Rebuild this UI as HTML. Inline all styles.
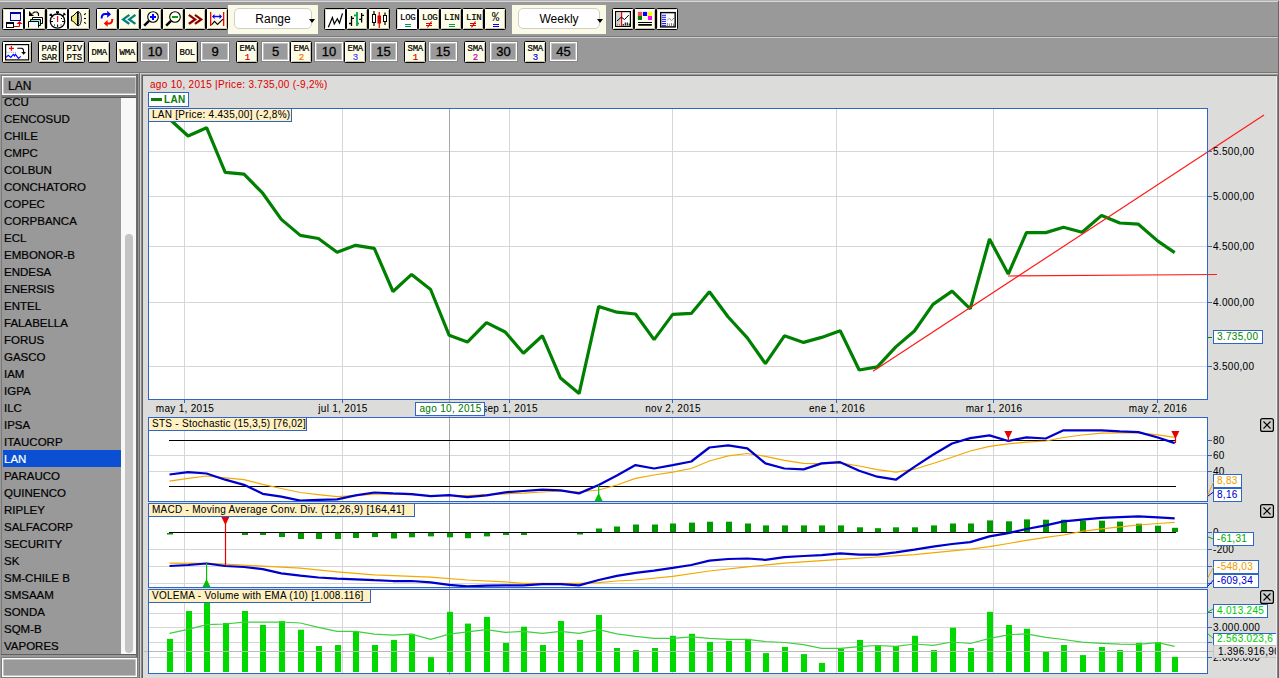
<!DOCTYPE html>
<html><head><meta charset="utf-8"><style>
html,body{margin:0;padding:0;width:1279px;height:678px;overflow:hidden;background:#999999;font-family:"Liberation Sans", sans-serif;}
.bs{position:absolute;display:block}
.dd{position:absolute;background:#fff;border:1px solid #cfcfc8;border-radius:5px;font-size:12px;line-height:21.5px;text-align:center;color:#000}
.fld{position:absolute;border:1px solid #fff;box-shadow:0 0 0 1px #858585, inset 0 0 0 1px #c0c0c0;background:#9a9a9a;font-size:13px;line-height:20px;text-align:center;color:#000;-webkit-text-stroke:0.3px #000}
.li{position:absolute;left:2px;font-size:11.5px;line-height:14px;color:#000;white-space:nowrap;-webkit-text-stroke:0.2px currentColor}
</style></head><body>
<div style="position:absolute;left:0;top:0;width:1279px;height:1px;background:#b4b4b4"></div><div style="position:absolute;left:0;top:1px;width:1279px;height:1px;background:#d8d8d8"></div><div style="position:absolute;left:1278px;top:1px;width:1px;height:677px;background:#666"></div>
<div style="position:absolute;left:0;top:36px;width:1279px;height:1px;background:#7a7a7a"></div>
<div style="position:absolute;left:0;top:37px;width:1279px;height:1px;background:#cdcdcd"></div>
<div style="position:absolute;left:0;top:72px;width:1279px;height:1px;background:#777"></div>
<div style="position:absolute;left:0;top:73px;width:1279px;height:1px;background:#cdcdcd"></div>
<svg class="bs" style="left:2px;top:8px" width="22" height="22"><rect x="0.5" y="0.5" width="21" height="21" rx="1" fill="#ffffff" stroke="#000"/><path d="M1.5 20 V1.5 H20" stroke="#dedac0" fill="none"/><path d="M2 20.5 H20.5 V2" stroke="#ffffff" fill="none"/><rect x="8.5" y="4.5" width="10" height="8" fill="#f4f4f4" stroke="#0000a8"/><rect x="8" y="4" width="11" height="2" fill="#0000a8"/><rect x="4.5" y="14.5" width="7" height="5" fill="#fff" stroke="#000"/><rect x="4" y="14" width="8" height="2" fill="#000"/><path d="M12 18.5 H17.5 V15" fill="none" stroke="#e00" stroke-width="1"/><path d="M14.5 16 L17.5 13 L20.5 16 Z" fill="#e00"/></svg><svg class="bs" style="left:24px;top:8px" width="22" height="22"><rect x="0.5" y="0.5" width="21" height="21" rx="1" fill="#fdfce6" stroke="#000"/><path d="M1.5 20 V1.5 H20" stroke="#ffffff" fill="none"/><path d="M2 20.5 H20.5 V2" stroke="#c9c6ad" fill="none"/><path d="M5 3 V8 H10 Z" fill="#000"/><path d="M8.5 5.5 L10.5 4 H13 L14.5 5.5 V8" fill="none" stroke="#000" stroke-width="1.1"/><path d="M8.5 15 V9.5 H18.5 V15.5 H16" fill="#fff" stroke="#000"/><path d="M6.5 17 V11.5 H16.5 V17.5 H14" fill="#80f0f0" stroke="#000"/><path d="M4.5 19.5 V13.5 H14.5 V19.5" fill="#f8f8f8" stroke="#000"/></svg><svg class="bs" style="left:46px;top:8px" width="22" height="22"><rect x="0.5" y="0.5" width="21" height="21" rx="1" fill="#ffffff" stroke="#000"/><path d="M1.5 20 V1.5 H20" stroke="#dedac0" fill="none"/><path d="M2 20.5 H20.5 V2" stroke="#ffffff" fill="none"/><path d="M11.5 6 C16 6 18.7 9 18.7 13.2 C18.7 17.5 15.5 20.2 11.5 20.2 C7.5 20.2 4.3 17.5 4.3 13.2 C4.3 9 7 6 11.5 6 Z" fill="#fff" stroke="#000" stroke-width="1.3"/><rect x="10" y="3.2" width="3" height="1.8" fill="#000"/><rect x="11" y="4.5" width="1" height="2" fill="#000"/><path d="M4 6 L7 9 M3.5 7.5 L6 6 M19 5.5 L16 8.5 M17.5 5 L19.5 7" stroke="#000" stroke-width="1.3"/><rect x="11" y="8" width="1.2" height="6" fill="#f00"/><path d="M11.6 16.5 V19 M4.5 13.5 H7 M16 13.5 H18.5" stroke="#000" stroke-width="1"/><rect x="7.5" y="10" width="1" height="1" fill="#000"/><rect x="15" y="10" width="1" height="1" fill="#000"/><rect x="8" y="16.5" width="1" height="1" fill="#000"/><rect x="14.5" y="16.5" width="1" height="1" fill="#000"/></svg><svg class="bs" style="left:68px;top:8px" width="22" height="22"><rect x="0.5" y="0.5" width="21" height="21" rx="1" fill="#fdfce6" stroke="#000"/><path d="M1.5 20 V1.5 H20" stroke="#ffffff" fill="none"/><path d="M2 20.5 H20.5 V2" stroke="#c9c6ad" fill="none"/><path d="M3.5 8.5 L5 8 L9.5 3.5 L9.5 17.8 L5 13.2 L3.5 12.8 Z" fill="#f0ea80" stroke="#000"/><path d="M10 3.5 C12.5 3.8 13.3 8 13.3 10.7 C13.3 13.5 12.5 17.7 10 17.8 C11 15 11 6 10 3.5 Z" fill="#fff" stroke="#000" stroke-width="1"/><path d="M16.2 6.8 L17.8 5.3 M16 10.5 H18 M16.2 14.2 L17.8 15.7" stroke="#000" stroke-width="1.1"/></svg><svg class="bs" style="left:96px;top:8px" width="22" height="22"><rect x="0.5" y="0.5" width="21" height="21" rx="1" fill="#fdfce6" stroke="#000"/><path d="M1.5 20 V1.5 H20" stroke="#ffffff" fill="none"/><path d="M2 20.5 H20.5 V2" stroke="#c9c6ad" fill="none"/><path d="M5.6 10.6 C5.6 7.5 7 6 9 6 H11.8" fill="none" stroke="#0000ff" stroke-width="2"/><path d="M11.2 2.8 L15 6.2 L11.2 9.8 Z" fill="#0000ff"/><path d="M16.3 11 C16.3 14 15.5 15.4 13.5 15.4 H10.8" fill="none" stroke="#ff0000" stroke-width="2"/><path d="M11.6 12 L7.8 15.4 L11.6 18.8 Z" fill="#ff0000"/></svg><svg class="bs" style="left:118px;top:8px" width="22" height="22"><rect x="0.5" y="0.5" width="21" height="21" rx="1" fill="#fdfce6" stroke="#000"/><path d="M1.5 20 V1.5 H20" stroke="#ffffff" fill="none"/><path d="M2 20.5 H20.5 V2" stroke="#c9c6ad" fill="none"/><path d="M10.4 7.6 L5.1 11.4 L10.4 15.2 M16.5 7.6 L11.2 11.4 L16.5 15.2" fill="none" stroke="#008080" stroke-width="2.3" stroke-linecap="square"/></svg><svg class="bs" style="left:140px;top:8px" width="22" height="22"><rect x="0.5" y="0.5" width="21" height="21" rx="1" fill="#fdfce6" stroke="#000"/><path d="M1.5 20 V1.5 H20" stroke="#ffffff" fill="none"/><path d="M2 20.5 H20.5 V2" stroke="#c9c6ad" fill="none"/><circle cx="13" cy="9" r="5.3" fill="#fff" stroke="#000" stroke-width="1.1"/><path d="M9 12.9 L4.2 17.7" stroke="#000" stroke-width="2.4"/><path d="M10 9 H16 M13 6 V12" stroke="#0000ff" stroke-width="2"/></svg><svg class="bs" style="left:162px;top:8px" width="22" height="22"><rect x="0.5" y="0.5" width="21" height="21" rx="1" fill="#fdfce6" stroke="#000"/><path d="M1.5 20 V1.5 H20" stroke="#ffffff" fill="none"/><path d="M2 20.5 H20.5 V2" stroke="#c9c6ad" fill="none"/><circle cx="13" cy="9" r="5.3" fill="#fff" stroke="#000" stroke-width="1.1"/><path d="M9 12.9 L4.2 17.7" stroke="#000" stroke-width="2.4"/><path d="M10 9 H16" stroke="#00a000" stroke-width="2"/></svg><svg class="bs" style="left:184px;top:8px" width="22" height="22"><rect x="0.5" y="0.5" width="21" height="21" rx="1" fill="#fdfce6" stroke="#000"/><path d="M1.5 20 V1.5 H20" stroke="#ffffff" fill="none"/><path d="M2 20.5 H20.5 V2" stroke="#c9c6ad" fill="none"/><path d="M5.8 7.6 L11.1 11.4 L5.8 15.2 M11.9 7.6 L17.2 11.4 L11.9 15.2" fill="none" stroke="#8c0000" stroke-width="2.3" stroke-linecap="square"/></svg><svg class="bs" style="left:206px;top:8px" width="22" height="22"><rect x="0.5" y="0.5" width="21" height="21" rx="1" fill="#fdfce6" stroke="#000"/><path d="M1.5 20 V1.5 H20" stroke="#ffffff" fill="none"/><path d="M2 20.5 H20.5 V2" stroke="#c9c6ad" fill="none"/><rect x="4" y="4" width="1.3" height="14" fill="#f00"/><rect x="17" y="4" width="1.3" height="14" fill="#f00"/><path d="M7 8.5 H15" stroke="#0000ff" stroke-width="1.4"/><path d="M6 8.5 L8.5 6 V11 Z M16 8.5 L13.5 6 V11 Z" fill="#0000ff"/><path d="M5.5 16.8 L8.5 13.3 L11.5 16.5 L17 11.2" fill="none" stroke="#000" stroke-width="1.1"/></svg><svg class="bs" style="left:324px;top:8px" width="22" height="22"><rect x="0.5" y="0.5" width="21" height="21" rx="1" fill="#ffffff" stroke="#000"/><path d="M1.5 20 V1.5 H20" stroke="#dedac0" fill="none"/><path d="M2 20.5 H20.5 V2" stroke="#ffffff" fill="none"/><path d="M4.3 19.2 L8.4 9.6 L10.3 16 L13.3 10.7 L15.5 15 L18.5 5.4" fill="none" stroke="#000" stroke-width="1.25"/></svg><svg class="bs" style="left:346px;top:8px" width="22" height="22"><rect x="0.5" y="0.5" width="21" height="21" rx="1" fill="#fdfce6" stroke="#000"/><path d="M1.5 20 V1.5 H20" stroke="#ffffff" fill="none"/><path d="M2 20.5 H20.5 V2" stroke="#c9c6ad" fill="none"/><path d="M5.5 8 V18 M3 15.5 H5.5 M5.5 10.3 H8 M15.6 5 V14.6 M13.2 11.4 H15.6 M15.6 7.3 H18" stroke="#000" stroke-width="1.3"/><path d="M11 4 V18 M8 7.3 H11 M11 15.5 H13" stroke="#00a050" stroke-width="1.8"/></svg><svg class="bs" style="left:368px;top:8px" width="22" height="22"><rect x="0.5" y="0.5" width="21" height="21" rx="1" fill="#fdfce6" stroke="#000"/><path d="M1.5 20 V1.5 H20" stroke="#ffffff" fill="none"/><path d="M2 20.5 H20.5 V2" stroke="#c9c6ad" fill="none"/><rect x="4.5" y="6.5" width="3" height="8" fill="#fff" stroke="#000"/><path d="M6 3 V6.5 M6 14.5 V18" stroke="#000" stroke-width="1.2"/><rect x="9.5" y="7.5" width="3.5" height="8" fill="#d00"/><path d="M11.25 4 V20" stroke="#d00" stroke-width="1.2"/><rect x="15.5" y="7.5" width="3" height="6" fill="#fff" stroke="#000"/><path d="M17 4.5 V7.5 M17 13.5 V17" stroke="#000" stroke-width="1.2"/></svg><svg class="bs" style="left:396px;top:8px" width="22" height="22"><rect x="0.5" y="0.5" width="21" height="21" rx="1" fill="#ffffff" stroke="#000"/><path d="M1.5 20 V1.5 H20" stroke="#dedac0" fill="none"/><path d="M2 20.5 H20.5 V2" stroke="#ffffff" fill="none"/><text x="11.8" y="12" font-size="9" text-anchor="middle" fill="#000" stroke="#000" stroke-width="0.2" font-family="'Liberation Mono', monospace" letter-spacing="-0.25">LOG</text><path d="M9 16.5 H15 M9 18.5 H15" stroke="#00a040" stroke-width="1.2"/></svg><svg class="bs" style="left:418px;top:8px" width="22" height="22"><rect x="0.5" y="0.5" width="21" height="21" rx="1" fill="#fdfce6" stroke="#000"/><path d="M1.5 20 V1.5 H20" stroke="#ffffff" fill="none"/><path d="M2 20.5 H20.5 V2" stroke="#c9c6ad" fill="none"/><text x="11.8" y="12" font-size="9" text-anchor="middle" fill="#000" stroke="#000" stroke-width="0.2" font-family="'Liberation Mono', monospace" letter-spacing="-0.25">LOG</text><path d="M8 15.5 H14 M8 17.5 H14 M13.5 13.5 L9.5 19.5" stroke="#e00000" stroke-width="1.2"/></svg><svg class="bs" style="left:440px;top:8px" width="22" height="22"><rect x="0.5" y="0.5" width="21" height="21" rx="1" fill="#fdfce6" stroke="#000"/><path d="M1.5 20 V1.5 H20" stroke="#ffffff" fill="none"/><path d="M2 20.5 H20.5 V2" stroke="#c9c6ad" fill="none"/><text x="11.8" y="12" font-size="9" text-anchor="middle" fill="#000" stroke="#000" stroke-width="0.2" font-family="'Liberation Mono', monospace" letter-spacing="-0.25">LIN</text><path d="M9 16.5 H15 M9 18.5 H15" stroke="#00a040" stroke-width="1.2"/></svg><svg class="bs" style="left:462px;top:8px" width="22" height="22"><rect x="0.5" y="0.5" width="21" height="21" rx="1" fill="#fdfce6" stroke="#000"/><path d="M1.5 20 V1.5 H20" stroke="#ffffff" fill="none"/><path d="M2 20.5 H20.5 V2" stroke="#c9c6ad" fill="none"/><text x="11.8" y="12" font-size="9" text-anchor="middle" fill="#000" stroke="#000" stroke-width="0.2" font-family="'Liberation Mono', monospace" letter-spacing="-0.25">LIN</text><path d="M8 15.5 H14 M8 17.5 H14 M13.5 13.5 L9.5 19.5" stroke="#e00000" stroke-width="1.2"/></svg><svg class="bs" style="left:484px;top:8px" width="22" height="22"><rect x="0.5" y="0.5" width="21" height="21" rx="1" fill="#fdfce6" stroke="#000"/><path d="M1.5 20 V1.5 H20" stroke="#ffffff" fill="none"/><path d="M2 20.5 H20.5 V2" stroke="#c9c6ad" fill="none"/><text x="11.5" y="12.5" font-size="12" text-anchor="middle" fill="#000" font-family="'Liberation Mono', monospace">%</text><path d="M9 16.5 H15 M9 18.5 H15" stroke="#0000ff" stroke-width="1.2"/></svg><svg class="bs" style="left:612px;top:8px" width="22" height="22"><rect x="0.5" y="0.5" width="21" height="21" rx="1" fill="#fdfce6" stroke="#000"/><path d="M1.5 20 V1.5 H20" stroke="#ffffff" fill="none"/><path d="M2 20.5 H20.5 V2" stroke="#c9c6ad" fill="none"/><rect x="3.6" y="3.6" width="14.8" height="14.8" fill="#fff" stroke="#000" stroke-width="1.2"/><rect x="4.5" y="4.5" width="4.5" height="13.5" fill="#d0d0d0"/><rect x="9" y="4" width="1.2" height="14" fill="#f00"/><path d="M5 13 L9.3 9.2 L12.5 11.5 L16.7 7.2" fill="none" stroke="#000" stroke-width="1"/><path d="M5.5 16 V17.5 M7.5 16 V17.5" stroke="#999"/><path d="M11.3 16 V17.5 M13.3 14.5 V17.5 M15.3 14.5 V17.5 M17.3 15.5 V17.5" stroke="#000" stroke-width="1.1"/></svg><svg class="bs" style="left:634px;top:8px" width="22" height="22"><rect x="0.5" y="0.5" width="21" height="21" rx="1" fill="#fdfce6" stroke="#000"/><path d="M1.5 20 V1.5 H20" stroke="#ffffff" fill="none"/><path d="M2 20.5 H20.5 V2" stroke="#c9c6ad" fill="none"/><rect x="3.9" y="3.9" width="4.1" height="4.1" fill="#ff5050"/><rect x="8.9" y="3.9" width="4.2" height="4.1" fill="#0000ff"/><rect x="14" y="3.9" width="4" height="4.1" fill="#ffff00"/><rect x="3.9" y="8" width="4.1" height="4" fill="#008000"/><rect x="14" y="8" width="4" height="4" fill="#ff00ff"/><rect x="4" y="14" width="14" height="1" fill="#000"/><rect x="4" y="16" width="14" height="1.8" rx="0.8" fill="#000"/></svg><svg class="bs" style="left:656px;top:8px" width="22" height="22"><rect x="0.5" y="0.5" width="21" height="21" rx="1" fill="#ffffff" stroke="#000"/><path d="M1.5 20 V1.5 H20" stroke="#dedac0" fill="none"/><path d="M2 20.5 H20.5 V2" stroke="#ffffff" fill="none"/><rect x="4.7" y="4.6" width="14.5" height="14.3" fill="#fafafa" stroke="#000" stroke-width="1.4"/><path d="M6 7.3 H10 M6 9.3 H10 M6 11.4 H10 M6 13.4 H10 M6 15.5 H10 M6 17.4 H10" stroke="#0000ff" stroke-width="0.9"/><path d="M11 12.7 L13.4 10.1 L15.5 12.7 L18.8 9.1" fill="none" stroke="#888" stroke-width="0.9"/><path d="M11.3 15 V18 M13.4 15.5 V18 M15.5 15 V18 M17.5 15.5 V18" stroke="#888"/></svg><div style="position:absolute;left:228px;top:5px;width:90px;height:29px;background:#fbfae6"></div><div class="dd" style="left:234px;top:8px;width:76px;height:19px">Range</div><svg style="position:absolute;left:309px;top:19px" width="6" height="4"><path d="M0 0 H6 L3 4 Z" fill="#000"/></svg><div style="position:absolute;left:512px;top:5px;width:94px;height:29px;background:#fbfae6"></div><div class="dd" style="left:518px;top:8px;width:80px;height:19px">Weekly</div><svg style="position:absolute;left:597px;top:19px" width="6" height="4"><path d="M0 0 H6 L3 4 Z" fill="#000"/></svg><svg class="bs" style="left:2px;top:41px" width="30" height="22"><rect x="0.5" y="0.5" width="29" height="21" rx="1" fill="#fdfce6" stroke="#000"/><path d="M1.5 20 V1.5 H28" stroke="#ffffff" fill="none"/><path d="M2 20.5 H28.5 V2" stroke="#c9c6ad" fill="none"/><rect x="3.6" y="3.6" width="23" height="15.3" fill="#fff" stroke="#000" stroke-width="1.2"/><path d="M7 7.4 H12 M9.4 5 V9.8" stroke="#f00" stroke-width="1.2"/><path d="M4.5 11.4 H15" stroke="#999" stroke-width="0.9" stroke-dasharray="1 1.1"/><path d="M4 16.4 L6.3 14.3 L8.8 16.4 L11.3 13.3 L12.4 14.9 L13.4 13.3 L16.5 17.4 L18.8 15.3" fill="none" stroke="#0000ff" stroke-width="1.1"/><path d="M15.3 7.2 H19.5 Q21.6 7.5 21.6 10 V11.5" fill="none" stroke="#000" stroke-width="1.1"/><path d="M19.3 11 H24 L21.6 13.8 Z" fill="#000"/></svg><svg class="bs" style="left:38px;top:41px" width="22" height="22"><rect x="0.5" y="0.5" width="21" height="21" rx="1" fill="#fdfce6" stroke="#000"/><path d="M1.5 20 V1.5 H20" stroke="#ffffff" fill="none"/><path d="M2 20.5 H20.5 V2" stroke="#c9c6ad" fill="none"/><text x="11.3" y="9.8" font-size="9" text-anchor="middle" fill="#000" stroke="#000" stroke-width="0.2" font-family="'Liberation Mono', monospace" letter-spacing="-0.25">PAR</text><text x="11.3" y="18.8" font-size="9" text-anchor="middle" fill="#000" stroke="#000" stroke-width="0.2" font-family="'Liberation Mono', monospace" letter-spacing="-0.25">SAR</text></svg><svg class="bs" style="left:63px;top:41px" width="22" height="22"><rect x="0.5" y="0.5" width="21" height="21" rx="1" fill="#fdfce6" stroke="#000"/><path d="M1.5 20 V1.5 H20" stroke="#ffffff" fill="none"/><path d="M2 20.5 H20.5 V2" stroke="#c9c6ad" fill="none"/><text x="11.3" y="9.8" font-size="9" text-anchor="middle" fill="#000" stroke="#000" stroke-width="0.2" font-family="'Liberation Mono', monospace" letter-spacing="-0.25">PIV</text><text x="11.3" y="18.8" font-size="9" text-anchor="middle" fill="#000" stroke="#000" stroke-width="0.2" font-family="'Liberation Mono', monospace" letter-spacing="-0.25">PTS</text></svg><svg class="bs" style="left:88px;top:41px" width="22" height="22"><rect x="0.5" y="0.5" width="21" height="21" rx="1" fill="#fdfce6" stroke="#000"/><path d="M1.5 20 V1.5 H20" stroke="#ffffff" fill="none"/><path d="M2 20.5 H20.5 V2" stroke="#c9c6ad" fill="none"/><text x="11.3" y="13.8" font-size="9" text-anchor="middle" fill="#000" stroke="#000" stroke-width="0.2" font-family="'Liberation Mono', monospace" letter-spacing="-0.25">DMA</text></svg><svg class="bs" style="left:116px;top:41px" width="22" height="22"><rect x="0.5" y="0.5" width="21" height="21" rx="1" fill="#fdfce6" stroke="#000"/><path d="M1.5 20 V1.5 H20" stroke="#ffffff" fill="none"/><path d="M2 20.5 H20.5 V2" stroke="#c9c6ad" fill="none"/><text x="11.3" y="13.8" font-size="9" text-anchor="middle" fill="#000" stroke="#000" stroke-width="0.2" font-family="'Liberation Mono', monospace" letter-spacing="-0.25">WMA</text></svg><div class="fld" style="left:141px;top:42px;width:26px;height:17px;line-height:18px">10</div><svg class="bs" style="left:176px;top:41px" width="22" height="22"><rect x="0.5" y="0.5" width="21" height="21" rx="1" fill="#fdfce6" stroke="#000"/><path d="M1.5 20 V1.5 H20" stroke="#ffffff" fill="none"/><path d="M2 20.5 H20.5 V2" stroke="#c9c6ad" fill="none"/><text x="11.3" y="13.8" font-size="9" text-anchor="middle" fill="#000" stroke="#000" stroke-width="0.2" font-family="'Liberation Mono', monospace" letter-spacing="-0.25">BOL</text></svg><div class="fld" style="left:201px;top:42px;width:26px;height:17px;line-height:18px">9</div><svg class="bs" style="left:236px;top:41px" width="22" height="22"><rect x="0.5" y="0.5" width="21" height="21" rx="1" fill="#fdfce6" stroke="#000"/><path d="M1.5 20 V1.5 H20" stroke="#ffffff" fill="none"/><path d="M2 20.5 H20.5 V2" stroke="#c9c6ad" fill="none"/><text x="11.3" y="9.8" font-size="9" text-anchor="middle" fill="#000" stroke="#000" stroke-width="0.2" font-family="'Liberation Mono', monospace" letter-spacing="-0.25">EMA</text><text x="11.3" y="18.8" font-size="9" text-anchor="middle" fill="#e00000" stroke="#e00000" stroke-width="0.2" font-family="'Liberation Mono', monospace" letter-spacing="-0.25">1</text></svg><div class="fld" style="left:262px;top:42px;width:25px;height:17px;line-height:18px">5</div><svg class="bs" style="left:290px;top:41px" width="22" height="22"><rect x="0.5" y="0.5" width="21" height="21" rx="1" fill="#fdfce6" stroke="#000"/><path d="M1.5 20 V1.5 H20" stroke="#ffffff" fill="none"/><path d="M2 20.5 H20.5 V2" stroke="#c9c6ad" fill="none"/><text x="11.3" y="9.8" font-size="9" text-anchor="middle" fill="#000" stroke="#000" stroke-width="0.2" font-family="'Liberation Mono', monospace" letter-spacing="-0.25">EMA</text><text x="11.3" y="18.8" font-size="9" text-anchor="middle" fill="#f07000" stroke="#f07000" stroke-width="0.2" font-family="'Liberation Mono', monospace" letter-spacing="-0.25">2</text></svg><div class="fld" style="left:315px;top:42px;width:26px;height:17px;line-height:18px">10</div><svg class="bs" style="left:344px;top:41px" width="22" height="22"><rect x="0.5" y="0.5" width="21" height="21" rx="1" fill="#fdfce6" stroke="#000"/><path d="M1.5 20 V1.5 H20" stroke="#ffffff" fill="none"/><path d="M2 20.5 H20.5 V2" stroke="#c9c6ad" fill="none"/><text x="11.3" y="9.8" font-size="9" text-anchor="middle" fill="#000" stroke="#000" stroke-width="0.2" font-family="'Liberation Mono', monospace" letter-spacing="-0.25">EMA</text><text x="11.3" y="18.8" font-size="9" text-anchor="middle" fill="#4040ff" stroke="#4040ff" stroke-width="0.2" font-family="'Liberation Mono', monospace" letter-spacing="-0.25">3</text></svg><div class="fld" style="left:370px;top:42px;width:25px;height:17px;line-height:18px">15</div><svg class="bs" style="left:404px;top:41px" width="22" height="22"><rect x="0.5" y="0.5" width="21" height="21" rx="1" fill="#fdfce6" stroke="#000"/><path d="M1.5 20 V1.5 H20" stroke="#ffffff" fill="none"/><path d="M2 20.5 H20.5 V2" stroke="#c9c6ad" fill="none"/><text x="11.3" y="9.8" font-size="9" text-anchor="middle" fill="#000" stroke="#000" stroke-width="0.2" font-family="'Liberation Mono', monospace" letter-spacing="-0.25">SMA</text><text x="11.3" y="18.8" font-size="9" text-anchor="middle" fill="#e00000" stroke="#e00000" stroke-width="0.2" font-family="'Liberation Mono', monospace" letter-spacing="-0.25">1</text></svg><div class="fld" style="left:429px;top:42px;width:26px;height:17px;line-height:18px">15</div><svg class="bs" style="left:464px;top:41px" width="22" height="22"><rect x="0.5" y="0.5" width="21" height="21" rx="1" fill="#fdfce6" stroke="#000"/><path d="M1.5 20 V1.5 H20" stroke="#ffffff" fill="none"/><path d="M2 20.5 H20.5 V2" stroke="#c9c6ad" fill="none"/><text x="11.3" y="9.8" font-size="9" text-anchor="middle" fill="#000" stroke="#000" stroke-width="0.2" font-family="'Liberation Mono', monospace" letter-spacing="-0.25">SMA</text><text x="11.3" y="18.8" font-size="9" text-anchor="middle" fill="#c000c0" stroke="#c000c0" stroke-width="0.2" font-family="'Liberation Mono', monospace" letter-spacing="-0.25">2</text></svg><div class="fld" style="left:490px;top:42px;width:25px;height:17px;line-height:18px">30</div><svg class="bs" style="left:524px;top:41px" width="22" height="22"><rect x="0.5" y="0.5" width="21" height="21" rx="1" fill="#fdfce6" stroke="#000"/><path d="M1.5 20 V1.5 H20" stroke="#ffffff" fill="none"/><path d="M2 20.5 H20.5 V2" stroke="#c9c6ad" fill="none"/><text x="11.3" y="9.8" font-size="9" text-anchor="middle" fill="#000" stroke="#000" stroke-width="0.2" font-family="'Liberation Mono', monospace" letter-spacing="-0.25">SMA</text><text x="11.3" y="18.8" font-size="9" text-anchor="middle" fill="#0000ee" stroke="#0000ee" stroke-width="0.2" font-family="'Liberation Mono', monospace" letter-spacing="-0.25">3</text></svg><div class="fld" style="left:550px;top:42px;width:25px;height:17px;line-height:18px">45</div>
<!-- left panel -->
<svg style="position:absolute;left:0;top:0" width="145" height="678">
<rect x="0" y="74" width="139" height="604" fill="#999"/>
<rect x="1" y="75" width="137" height="22" fill="#7c7c7c"/>
<rect x="2" y="76" width="135" height="19" fill="#fff"/>
<rect x="3.4" y="77.4" width="132.2" height="16.2" fill="#999"/>
<rect x="1" y="97" width="136" height="1" fill="#5a5a5a"/>
<rect x="1" y="97" width="1" height="558" fill="#7a7a7a"/>
<rect x="121" y="98" width="15" height="556" fill="#f8f8f8"/>
<rect x="125" y="234" width="8" height="419" rx="4" fill="#c4c4c4"/>
<rect x="1" y="654" width="137" height="1" fill="#5e5e5e"/>
<rect x="136" y="74" width="1" height="604" fill="#6e6e6e"/>
<rect x="137" y="74" width="1" height="604" fill="#646464"/>
<rect x="138" y="74" width="1" height="604" fill="#9a9a9a"/>
<rect x="139" y="73" width="1" height="605" fill="#707070"/>
<rect x="140" y="73" width="1" height="605" fill="#d4d4d4"/>
<rect x="141" y="75" width="1" height="603" fill="#8a8a8a"/>
<rect x="142" y="75" width="3" height="603" fill="#626262"/>
<rect x="1" y="657" width="137" height="21" fill="#7c7c7c"/>
<rect x="2" y="658" width="135" height="19" fill="#fff"/>
<rect x="3.4" y="659.4" width="132.2" height="16.2" fill="#999"/>
</svg>
<div style="position:absolute;left:8px;top:79px;font-size:12px;line-height:15px;color:#000;-webkit-text-stroke:0.2px #000">LAN</div>
<div style="position:absolute;left:142px;top:75px;width:1135px;height:1px;background:#626262"></div>
<div style="position:absolute;left:2px;top:98px;width:119px;height:556px;overflow:hidden">
<div class="li" style="top:-3.049999999999997px">CCU</div><div class="li" style="top:13.950000000000003px">CENCOSUD</div><div class="li" style="top:30.94999999999999px">CHILE</div><div class="li" style="top:47.94999999999999px">CMPC</div><div class="li" style="top:64.94999999999999px">COLBUN</div><div class="li" style="top:81.94999999999999px">CONCHATORO</div><div class="li" style="top:98.94999999999999px">COPEC</div><div class="li" style="top:115.94999999999999px">CORPBANCA</div><div class="li" style="top:132.95px">ECL</div><div class="li" style="top:149.95px">EMBONOR-B</div><div class="li" style="top:166.95px">ENDESA</div><div class="li" style="top:183.95px">ENERSIS</div><div class="li" style="top:200.95px">ENTEL</div><div class="li" style="top:217.95px">FALABELLA</div><div class="li" style="top:234.95px">FORUS</div><div class="li" style="top:251.95px">GASCO</div><div class="li" style="top:268.95px">IAM</div><div class="li" style="top:285.95px">IGPA</div><div class="li" style="top:302.95px">ILC</div><div class="li" style="top:319.95px">IPSA</div><div class="li" style="top:336.95px">ITAUCORP</div><div style="position:absolute;left:1px;top:352px;width:118px;height:17px;background:#0b50d2"></div><div class="li" style="top:353.95px;color:#fff">LAN</div><div class="li" style="top:370.95px">PARAUCO</div><div class="li" style="top:387.95px">QUINENCO</div><div class="li" style="top:404.95px">RIPLEY</div><div class="li" style="top:421.95000000000005px">SALFACORP</div><div class="li" style="top:438.95000000000005px">SECURITY</div><div class="li" style="top:455.95000000000005px">SK</div><div class="li" style="top:472.95000000000005px">SM-CHILE B</div><div class="li" style="top:489.95000000000005px">SMSAAM</div><div class="li" style="top:506.95000000000005px">SONDA</div><div class="li" style="top:523.95px">SQM-B</div><div class="li" style="top:540.95px">VAPORES</div>
</div>
<svg style="position:absolute;left:0;top:0;font-family:'Liberation Sans',sans-serif" width="1279" height="678" viewBox="0 0 1279 678">
<rect x="143" y="76" width="1134" height="602" fill="#dcdddb"/>
<rect x="148" y="108" width="1060" height="292" fill="#ffffff"/>
<rect x="148" y="417" width="1060" height="85" fill="#ffffff"/>
<rect x="148" y="503" width="1060" height="85" fill="#ffffff"/>
<rect x="148" y="589" width="1060" height="85" fill="#ffffff"/>
<rect x="184" y="108" width="1" height="291" fill="#d6d6d6"/>
<rect x="342" y="108" width="1" height="291" fill="#d6d6d6"/>
<rect x="509" y="108" width="1" height="291" fill="#d6d6d6"/>
<rect x="672" y="108" width="1" height="291" fill="#d6d6d6"/>
<rect x="836" y="108" width="1" height="291" fill="#d6d6d6"/>
<rect x="993" y="108" width="1" height="291" fill="#d6d6d6"/>
<rect x="1157" y="108" width="1" height="291" fill="#d6d6d6"/>
<rect x="184" y="417" width="1" height="84" fill="#d6d6d6"/>
<rect x="342" y="417" width="1" height="84" fill="#d6d6d6"/>
<rect x="509" y="417" width="1" height="84" fill="#d6d6d6"/>
<rect x="672" y="417" width="1" height="84" fill="#d6d6d6"/>
<rect x="836" y="417" width="1" height="84" fill="#d6d6d6"/>
<rect x="993" y="417" width="1" height="84" fill="#d6d6d6"/>
<rect x="1157" y="417" width="1" height="84" fill="#d6d6d6"/>
<rect x="184" y="503" width="1" height="84" fill="#d6d6d6"/>
<rect x="342" y="503" width="1" height="84" fill="#d6d6d6"/>
<rect x="509" y="503" width="1" height="84" fill="#d6d6d6"/>
<rect x="672" y="503" width="1" height="84" fill="#d6d6d6"/>
<rect x="836" y="503" width="1" height="84" fill="#d6d6d6"/>
<rect x="993" y="503" width="1" height="84" fill="#d6d6d6"/>
<rect x="1157" y="503" width="1" height="84" fill="#d6d6d6"/>
<rect x="184" y="589" width="1" height="84" fill="#d6d6d6"/>
<rect x="342" y="589" width="1" height="84" fill="#d6d6d6"/>
<rect x="509" y="589" width="1" height="84" fill="#d6d6d6"/>
<rect x="672" y="589" width="1" height="84" fill="#d6d6d6"/>
<rect x="836" y="589" width="1" height="84" fill="#d6d6d6"/>
<rect x="993" y="589" width="1" height="84" fill="#d6d6d6"/>
<rect x="1157" y="589" width="1" height="84" fill="#d6d6d6"/>
<rect x="149" y="151" width="1058" height="1" fill="#d6d6d6"/>
<rect x="149" y="196" width="1058" height="1" fill="#d6d6d6"/>
<rect x="149" y="246" width="1058" height="1" fill="#d6d6d6"/>
<rect x="149" y="302" width="1058" height="1" fill="#d6d6d6"/>
<rect x="149" y="366" width="1058" height="1" fill="#d6d6d6"/>
<rect x="149" y="455" width="1058" height="1" fill="#d6d6d6"/>
<rect x="149" y="471" width="1058" height="1" fill="#d6d6d6"/>
<rect x="149" y="549" width="1058" height="1" fill="#d6d6d6"/>
<rect x="149" y="566" width="1058" height="1" fill="#d6d6d6"/>
<rect x="149" y="583" width="1058" height="1" fill="#d6d6d6"/>
<rect x="149" y="613" width="1058" height="1" fill="#d6d6d6"/>
<rect x="149" y="627" width="1058" height="1" fill="#d6d6d6"/>
<rect x="149" y="642" width="1058" height="1" fill="#d6d6d6"/>
<rect x="149" y="657" width="1058" height="1" fill="#d6d6d6"/>
<rect x="449" y="108" width="1" height="567" fill="#a8a8a8"/>
<polyline points="169.5,119.0 188.1,136.0 206.6,127.7 225.2,172.3 244.0,174.2 262.7,193.2 281.3,219.4 300.3,235.4 318.4,238.5 337.1,252.2 355.6,245.3 374.3,248.3 393.0,291.5 411.6,274.4 430.6,289.5 449.2,335.3 467.4,342.1 486.5,322.6 505.2,332.0 523.4,353.3 542.4,335.8 560.5,378.1 579.1,393.6 598.7,306.4 616.9,312.2 635.5,314.0 654.1,339.6 672.7,314.4 691.3,313.4 709.4,291.7 728.2,317.0 747.3,337.8 765.4,363.6 784.4,335.8 803.6,342.4 821.6,337.4 840.2,330.8 859.2,370.0 877.3,366.8 895.8,346.9 914.4,331.0 933.0,304.4 952.1,291.1 970.2,308.9 989.5,239.0 1008.3,274.0 1026.4,232.6 1045.8,232.6 1063.5,227.3 1082.1,232.2 1101.6,215.4 1119.8,223.0 1138.4,224.2 1157.9,241.1 1174.7,252.6" fill="none" stroke="#008000" stroke-width="3.2" stroke-linejoin="bevel" stroke-linecap="butt"/>
<line x1="873" y1="371.3" x2="1264" y2="115" stroke="#ff1a1a" stroke-width="1.2"/>
<line x1="1008" y1="276" x2="1217" y2="274.5" stroke="#ff1a1a" stroke-width="1.2"/>
<rect x="169" y="440" width="1007" height="1" fill="#000"/>
<rect x="169" y="486" width="1007" height="1" fill="#000"/>
<polyline points="169.5,481.2 188.1,478.4 206.6,476.0 225.2,477.9 244.0,479.7 262.7,484.4 281.3,488.5 300.3,492.5 318.4,494.7 337.1,496.6 355.6,495.7 374.3,494.2 393.0,494.2 411.6,494.7 430.6,495.7 449.2,495.7 467.4,495.7 486.5,494.7 505.2,493.8 523.4,493.2 542.4,492.0 560.5,491.0 579.1,492.0 598.7,490.0 616.9,485.0 635.5,478.4 654.1,475.0 672.7,472.2 691.3,468.5 709.4,461.0 728.2,455.9 747.3,453.5 765.4,456.3 784.4,460.4 803.6,463.4 821.6,463.8 840.2,462.8 859.2,466.0 877.3,469.7 895.8,472.2 914.4,469.2 933.0,463.5 952.1,457.2 970.2,451.0 989.5,446.3 1008.3,443.8 1026.4,442.1 1045.8,441.0 1063.5,437.5 1082.1,435.0 1101.6,433.1 1119.8,432.9 1138.4,432.9 1157.9,434.8 1174.7,437.3" fill="none" stroke="#f2a900" stroke-width="1.2"/>
<polyline points="169.5,474.5 188.1,472.2 206.6,473.5 225.2,479.7 244.0,484.8 262.7,493.8 281.3,496.6 300.3,500.6 318.4,499.8 337.1,499.4 355.6,495.3 374.3,492.5 393.0,493.4 411.6,494.2 430.6,496.2 449.2,495.1 467.4,497.2 486.5,495.3 505.2,492.3 523.4,491.0 542.4,489.7 560.5,490.4 579.1,493.4 598.7,485.0 616.9,475.5 635.5,465.1 654.1,468.5 672.7,465.1 691.3,461.5 709.4,447.5 728.2,445.4 747.3,448.4 765.4,463.4 784.4,468.5 803.6,469.4 821.6,463.4 840.2,462.2 859.2,470.7 877.3,476.7 895.8,479.7 914.4,466.9 933.0,454.7 952.1,443.5 970.2,438.2 989.5,435.4 1008.3,441.0 1026.4,437.3 1045.8,438.5 1063.5,430.3 1082.1,430.3 1101.6,430.3 1119.8,431.3 1138.4,432.1 1157.9,437.5 1174.7,443.1" fill="none" stroke="#0000cc" stroke-width="2.25" stroke-linejoin="bevel"/>
<rect x="1007.8" y="431" width="1.2" height="10" fill="#e80000"/><polygon points="1004.3,431 1012.3,431 1008.3,439" fill="#e80000"/>
<rect x="1174.9" y="431" width="1.2" height="12" fill="#e80000"/><polygon points="1171.4,431 1179.4,431 1175.4,439" fill="#e80000"/>
<rect x="598.1" y="485" width="1.2" height="16" fill="#00c000"/><polygon points="594.6,501 602.6,501 598.6,493" fill="#00c000"/>
<rect x="169" y="532" width="1007" height="1" fill="#000"/>
<rect x="167.0" y="533" width="6" height="1.5" fill="#009900"/>
<rect x="242.0" y="533" width="6" height="2.0" fill="#009900"/>
<rect x="260.0" y="533" width="6" height="2.0" fill="#009900"/>
<rect x="279.0" y="533" width="6" height="4.0" fill="#009900"/>
<rect x="298.0" y="533" width="6" height="6.0" fill="#009900"/>
<rect x="316.0" y="533" width="6" height="6.0" fill="#009900"/>
<rect x="335.0" y="533" width="6" height="6.0" fill="#009900"/>
<rect x="353.0" y="533" width="6" height="5.0" fill="#009900"/>
<rect x="372.0" y="533" width="6" height="4.0" fill="#009900"/>
<rect x="391.0" y="533" width="6" height="5.5" fill="#009900"/>
<rect x="409.0" y="533" width="6" height="4.3" fill="#009900"/>
<rect x="428.0" y="533" width="6" height="3.4" fill="#009900"/>
<rect x="447.0" y="533" width="6" height="4.3" fill="#009900"/>
<rect x="465.0" y="533" width="6" height="5.2" fill="#009900"/>
<rect x="484.0" y="533" width="6" height="3.4" fill="#009900"/>
<rect x="503.0" y="533" width="6" height="2.0" fill="#009900"/>
<rect x="521.0" y="533" width="6" height="2.0" fill="#009900"/>
<rect x="577.0" y="533" width="6" height="1.5" fill="#009900"/>
<rect x="596.0" y="528.5" width="6" height="3.5" fill="#009900"/>
<rect x="614.0" y="526.5" width="6" height="5.5" fill="#009900"/>
<rect x="633.0" y="524.5" width="6" height="7.5" fill="#009900"/>
<rect x="652.0" y="524.5" width="6" height="7.5" fill="#009900"/>
<rect x="670.0" y="523.5" width="6" height="8.5" fill="#009900"/>
<rect x="689.0" y="522.6" width="6" height="9.4" fill="#009900"/>
<rect x="707.0" y="521.7" width="6" height="10.3" fill="#009900"/>
<rect x="726.0" y="521.7" width="6" height="10.3" fill="#009900"/>
<rect x="745.0" y="523.5" width="6" height="8.5" fill="#009900"/>
<rect x="763.0" y="525.4" width="6" height="6.6" fill="#009900"/>
<rect x="782.0" y="525.4" width="6" height="6.6" fill="#009900"/>
<rect x="801.0" y="525.4" width="6" height="6.6" fill="#009900"/>
<rect x="819.0" y="525.4" width="6" height="6.6" fill="#009900"/>
<rect x="838.0" y="525.4" width="6" height="6.6" fill="#009900"/>
<rect x="857.0" y="527.3" width="6" height="4.7" fill="#009900"/>
<rect x="875.0" y="528.2" width="6" height="3.8" fill="#009900"/>
<rect x="893.0" y="527.3" width="6" height="4.7" fill="#009900"/>
<rect x="912.0" y="527.3" width="6" height="4.7" fill="#009900"/>
<rect x="931.0" y="525.4" width="6" height="6.6" fill="#009900"/>
<rect x="950.0" y="523.5" width="6" height="8.5" fill="#009900"/>
<rect x="968.0" y="523.5" width="6" height="8.5" fill="#009900"/>
<rect x="987.0" y="520.4" width="6" height="11.6" fill="#009900"/>
<rect x="1006.0" y="521.3" width="6" height="10.7" fill="#009900"/>
<rect x="1024.0" y="519.4" width="6" height="12.6" fill="#009900"/>
<rect x="1043.0" y="519.7" width="6" height="12.3" fill="#009900"/>
<rect x="1061.0" y="519.7" width="6" height="12.3" fill="#009900"/>
<rect x="1080.0" y="520.7" width="6" height="11.3" fill="#009900"/>
<rect x="1099.0" y="520.7" width="6" height="11.3" fill="#009900"/>
<rect x="1117.0" y="521.6" width="6" height="10.4" fill="#009900"/>
<rect x="1136.0" y="523.7" width="6" height="8.3" fill="#009900"/>
<rect x="1155.0" y="525.7" width="6" height="6.3" fill="#009900"/>
<rect x="1172.0" y="527.8" width="6" height="4.2" fill="#009900"/>
<polyline points="169.5,563.2 206.6,563.3 225.2,564.1 262.7,566.2 300.3,568.2 337.1,571.8 374.3,574.8 430.6,577.2 467.4,580.0 505.2,581.9 523.4,583.3 560.5,583.4 579.1,583.4 598.7,582.6 616.9,581.0 635.5,580.0 672.7,576.3 709.4,571.0 747.3,566.9 784.4,563.2 821.6,560.7 840.2,559.4 877.3,557.0 914.4,554.7 970.2,549.1 989.5,546.7 1008.3,543.5 1026.4,540.3 1045.8,537.3 1063.5,535.0 1082.1,531.3 1101.6,528.8 1119.8,526.9 1138.4,525.0 1157.9,523.5 1174.7,522.3" fill="none" stroke="#f2a900" stroke-width="1.2"/>
<polyline points="169.5,566.0 188.1,565.0 206.6,563.5 225.2,566.0 244.0,567.0 262.7,569.2 281.3,573.3 300.3,575.7 318.4,577.5 337.1,578.6 355.6,579.3 374.3,580.2 393.0,581.0 411.6,581.0 430.6,582.3 449.2,584.8 467.4,586.3 486.5,585.7 505.2,585.3 523.4,585.3 542.4,584.2 560.5,584.2 579.1,585.3 598.7,580.0 616.9,575.9 635.5,572.9 654.1,570.7 672.7,567.9 691.3,565.0 709.4,560.7 728.2,559.0 747.3,558.5 765.4,559.8 784.4,557.2 803.6,556.0 821.6,555.1 840.2,553.4 859.2,554.7 877.3,554.7 895.8,552.3 914.4,549.7 933.0,546.7 952.1,544.0 970.2,542.2 989.5,536.3 1008.3,533.1 1026.4,529.0 1045.8,525.3 1063.5,521.3 1082.1,519.6 1101.6,517.9 1119.8,517.1 1138.4,516.3 1157.9,517.3 1174.7,518.4" fill="none" stroke="#0000cc" stroke-width="2.25" stroke-linejoin="bevel"/>
<rect x="224.9" y="517" width="1.2" height="48" fill="#e80000"/><polygon points="221.4,517 229.4,517 225.4,525" fill="#e80000"/>
<rect x="206.0" y="563" width="1.2" height="24" fill="#00c000"/><polygon points="202.5,587 210.5,587 206.5,579" fill="#00c000"/>
<rect x="167.0" y="638.9" width="6" height="33.1" fill="#00d800"/>
<rect x="186.0" y="611.0" width="6" height="61.0" fill="#00d800"/>
<rect x="204.0" y="590.0" width="6" height="82.0" fill="#00d800"/>
<rect x="223.0" y="623.0" width="6" height="49.0" fill="#00d800"/>
<rect x="242.0" y="611.0" width="6" height="61.0" fill="#00d800"/>
<rect x="260.0" y="625.0" width="6" height="47.0" fill="#00d800"/>
<rect x="279.0" y="621.0" width="6" height="51.0" fill="#00d800"/>
<rect x="298.0" y="629.7" width="6" height="42.3" fill="#00d800"/>
<rect x="316.0" y="646.0" width="6" height="26.0" fill="#00d800"/>
<rect x="335.0" y="645.0" width="6" height="27.0" fill="#00d800"/>
<rect x="353.0" y="631.4" width="6" height="40.6" fill="#00d800"/>
<rect x="372.0" y="645.0" width="6" height="27.0" fill="#00d800"/>
<rect x="391.0" y="639.9" width="6" height="32.1" fill="#00d800"/>
<rect x="409.0" y="633.8" width="6" height="38.2" fill="#00d800"/>
<rect x="428.0" y="657.2" width="6" height="14.8" fill="#00d800"/>
<rect x="447.0" y="611.8" width="6" height="60.2" fill="#00d800"/>
<rect x="465.0" y="623.6" width="6" height="48.4" fill="#00d800"/>
<rect x="484.0" y="616.9" width="6" height="55.1" fill="#00d800"/>
<rect x="503.0" y="642.9" width="6" height="29.1" fill="#00d800"/>
<rect x="521.0" y="626.7" width="6" height="45.3" fill="#00d800"/>
<rect x="540.0" y="645.0" width="6" height="27.0" fill="#00d800"/>
<rect x="558.0" y="621.0" width="6" height="51.0" fill="#00d800"/>
<rect x="577.0" y="639.9" width="6" height="32.1" fill="#00d800"/>
<rect x="596.0" y="614.9" width="6" height="57.1" fill="#00d800"/>
<rect x="614.0" y="648.0" width="6" height="24.0" fill="#00d800"/>
<rect x="633.0" y="650.0" width="6" height="22.0" fill="#00d800"/>
<rect x="652.0" y="648.0" width="6" height="24.0" fill="#00d800"/>
<rect x="670.0" y="635.8" width="6" height="36.2" fill="#00d800"/>
<rect x="689.0" y="633.8" width="6" height="38.2" fill="#00d800"/>
<rect x="707.0" y="641.9" width="6" height="30.1" fill="#00d800"/>
<rect x="726.0" y="640.9" width="6" height="31.1" fill="#00d800"/>
<rect x="745.0" y="638.9" width="6" height="33.1" fill="#00d800"/>
<rect x="763.0" y="653.1" width="6" height="18.9" fill="#00d800"/>
<rect x="782.0" y="647.0" width="6" height="25.0" fill="#00d800"/>
<rect x="801.0" y="654.1" width="6" height="17.9" fill="#00d800"/>
<rect x="819.0" y="662.9" width="6" height="9.1" fill="#00d800"/>
<rect x="838.0" y="648.4" width="6" height="23.6" fill="#00d800"/>
<rect x="857.0" y="639.9" width="6" height="32.1" fill="#00d800"/>
<rect x="875.0" y="645.0" width="6" height="27.0" fill="#00d800"/>
<rect x="893.0" y="646.0" width="6" height="26.0" fill="#00d800"/>
<rect x="912.0" y="635.8" width="6" height="36.2" fill="#00d800"/>
<rect x="931.0" y="650.0" width="6" height="22.0" fill="#00d800"/>
<rect x="950.0" y="627.7" width="6" height="44.3" fill="#00d800"/>
<rect x="968.0" y="648.0" width="6" height="24.0" fill="#00d800"/>
<rect x="987.0" y="611.8" width="6" height="60.2" fill="#00d800"/>
<rect x="1006.0" y="625.0" width="6" height="47.0" fill="#00d800"/>
<rect x="1024.0" y="628.7" width="6" height="43.3" fill="#00d800"/>
<rect x="1043.0" y="651.5" width="6" height="20.5" fill="#00d800"/>
<rect x="1061.0" y="645.0" width="6" height="27.0" fill="#00d800"/>
<rect x="1080.0" y="655.1" width="6" height="16.9" fill="#00d800"/>
<rect x="1099.0" y="647.0" width="6" height="25.0" fill="#00d800"/>
<rect x="1117.0" y="650.0" width="6" height="22.0" fill="#00d800"/>
<rect x="1136.0" y="642.9" width="6" height="29.1" fill="#00d800"/>
<rect x="1155.0" y="642.0" width="6" height="30.0" fill="#00d800"/>
<rect x="1172.0" y="656.9" width="6" height="15.1" fill="#00d800"/>
<polyline points="169.5,633.4 188.1,629.3 206.6,624.6 225.2,624.0 244.0,622.2 262.7,622.2 281.3,622.0 300.3,623.0 318.4,627.3 337.1,631.4 355.6,631.4 374.3,634.2 393.0,635.2 411.6,634.2 430.6,639.3 449.2,634.2 467.4,631.8 486.5,629.7 505.2,632.4 523.4,631.4 542.4,633.4 560.5,631.4 579.1,633.4 598.7,629.7 616.9,633.8 635.5,636.3 654.1,638.3 672.7,638.3 691.3,636.8 709.4,638.3 728.2,639.3 747.3,639.3 765.4,641.5 784.4,642.5 803.6,644.6 821.6,648.4 840.2,648.4 859.2,646.6 877.3,645.5 895.8,646.4 914.4,644.0 933.0,645.4 952.1,642.0 970.2,643.5 989.5,638.3 1008.3,634.8 1026.4,633.8 1045.8,637.4 1063.5,639.5 1082.1,642.2 1101.6,643.3 1119.8,644.2 1138.4,644.4 1157.9,642.7 1174.7,646.3" fill="none" stroke="#3fcf3f" stroke-width="1.2"/>
<rect x="144" y="651" width="1070" height="1" fill="#b9b9b9"/>
<rect x="148.5" y="108.5" width="1059" height="291" fill="none" stroke="#3065c8" stroke-width="1"/>
<rect x="148.5" y="417.5" width="1059" height="84" fill="none" stroke="#3065c8" stroke-width="1"/>
<rect x="148.5" y="503.5" width="1059" height="84" fill="none" stroke="#3065c8" stroke-width="1"/>
<rect x="148.5" y="589.5" width="1059" height="84" fill="none" stroke="#3065c8" stroke-width="1"/>
<rect x="148.5" y="108.5" width="143" height="13" fill="#fff1c1" stroke="#3065c8"/><text x="152" y="117.6" font-size="10" letter-spacing="0.27" fill="#000" stroke="#000" stroke-width="0.05">LAN [Price: 4.435,00] (-2,8%)</text>
<rect x="148.5" y="417.5" width="158" height="13" fill="#fff1c1" stroke="#3065c8"/><text x="152" y="426.6" font-size="10" letter-spacing="0.27" fill="#000" stroke="#000" stroke-width="0.05">STS - Stochastic (15,3,5) [76,02]</text>
<rect x="148.5" y="503.5" width="266" height="13" fill="#fff1c1" stroke="#3065c8"/><text x="152" y="512.6" font-size="10" letter-spacing="0.27" fill="#000" stroke="#000" stroke-width="0.05">MACD - Moving Average Conv. Div. (12,26,9) [164,41]</text>
<rect x="148.5" y="589.5" width="222" height="13" fill="#fff1c1" stroke="#3065c8"/><text x="152" y="598.6" font-size="10" letter-spacing="0.27" fill="#000" stroke="#000" stroke-width="0.05">VOLEMA - Volume with EMA (10) [1.008.116]</text>
<rect x="1208" y="151" width="4" height="1" fill="#3065c8"/><text x="1213" y="155" font-size="10" letter-spacing="0.3" fill="#000" stroke="#000" stroke-width="0.05">5.500,00</text>
<rect x="1208" y="196" width="4" height="1" fill="#3065c8"/><text x="1213" y="200" font-size="10" letter-spacing="0.3" fill="#000" stroke="#000" stroke-width="0.05">5.000,00</text>
<rect x="1208" y="246" width="4" height="1" fill="#3065c8"/><text x="1213" y="250" font-size="10" letter-spacing="0.3" fill="#000" stroke="#000" stroke-width="0.05">4.500,00</text>
<rect x="1208" y="302" width="4" height="1" fill="#3065c8"/><text x="1213" y="306" font-size="10" letter-spacing="0.3" fill="#000" stroke="#000" stroke-width="0.05">4.000,00</text>
<rect x="1208" y="366" width="4" height="1" fill="#3065c8"/><text x="1213" y="370" font-size="10" letter-spacing="0.3" fill="#000" stroke="#000" stroke-width="0.05">3.500,00</text>
<rect x="1208" y="440" width="4" height="1" fill="#3065c8"/><text x="1213" y="444" font-size="10" letter-spacing="0.3" fill="#000" stroke="#000" stroke-width="0.05">80</text>
<rect x="1208" y="455" width="4" height="1" fill="#3065c8"/><text x="1213" y="459" font-size="10" letter-spacing="0.3" fill="#000" stroke="#000" stroke-width="0.05">60</text>
<rect x="1208" y="471" width="4" height="1" fill="#3065c8"/><text x="1213" y="475" font-size="10" letter-spacing="0.3" fill="#000" stroke="#000" stroke-width="0.05">40</text>
<rect x="1208" y="532" width="4" height="1" fill="#3065c8"/><text x="1213" y="536" font-size="10" letter-spacing="0.3" fill="#000" stroke="#000" stroke-width="0.05">0</text>
<rect x="1208" y="549" width="4" height="1" fill="#3065c8"/><text x="1213" y="553" font-size="10" letter-spacing="0.3" fill="#000" stroke="#000" stroke-width="0.05">-200</text>
<rect x="1208" y="566" width="4" height="1" fill="#3065c8"/><rect x="1208" y="583" width="4" height="1" fill="#3065c8"/>
<rect x="1208" y="612" width="4" height="1" fill="#3065c8"/><rect x="1208" y="642" width="4" height="1" fill="#3065c8"/><rect x="1208" y="657" width="4" height="1" fill="#3065c8"/>
<rect x="1208" y="627" width="4" height="1" fill="#3065c8"/><text x="1213" y="631" font-size="10" letter-spacing="0.3" fill="#000" stroke="#000" stroke-width="0.05">3.000.000</text>
<text x="1213" y="661" font-size="10" letter-spacing="0.3" fill="#000" stroke="#000" stroke-width="0.05">2.000.000</text>
<rect x="1213.5" y="330.5" width="49" height="13" fill="#fff" stroke="#3065c8"/><text x="1217" y="339.8" font-size="10" letter-spacing="0.3" fill="#008800" stroke="#008800" stroke-width="0.05">3.735,00</text>
<rect x="1208" y="337" width="4" height="1" fill="#008800"/>
<rect x="1213.5" y="474.5" width="28" height="13" fill="#fff" stroke="#3065c8"/><text x="1217" y="483.8" font-size="10" letter-spacing="0.3" fill="#f0a000" stroke="#f0a000" stroke-width="0.05">8,83</text>
<rect x="1213.5" y="488.5" width="28" height="13" fill="#fff" stroke="#3065c8"/><text x="1217" y="497.8" font-size="10" letter-spacing="0.3" fill="#0000cc" stroke="#0000cc" stroke-width="0.05">8,16</text>
<line x1="1207.5" y1="495.5" x2="1213.5" y2="482" stroke="#f0a000"/><line x1="1208" y1="496" x2="1213.5" y2="492" stroke="#0000cc"/>
<rect x="1213.5" y="532.5" width="40" height="13" fill="#fff" stroke="#3065c8"/><text x="1217" y="541.8" font-size="10" letter-spacing="0.3" fill="#00aa00" stroke="#00aa00" stroke-width="0.05">-61,31</text>
<line x1="1208" y1="537" x2="1213.5" y2="539" stroke="#00aa00"/>
<rect x="1213.5" y="560.5" width="45" height="13" fill="#fff" stroke="#3065c8"/><text x="1217" y="569.8" font-size="10" letter-spacing="0.3" fill="#f0a000" stroke="#f0a000" stroke-width="0.05">-548,03</text>
<rect x="1213.5" y="574.5" width="45" height="13" fill="#fff" stroke="#3065c8"/><text x="1217" y="583.8" font-size="10" letter-spacing="0.3" fill="#0000cc" stroke="#0000cc" stroke-width="0.05">-609,34</text>
<line x1="1207.5" y1="578.5" x2="1213.5" y2="567" stroke="#f0a000"/><line x1="1207.5" y1="586.5" x2="1213.5" y2="580" stroke="#0000cc"/>
<rect x="1213.5" y="604.5" width="54" height="13" fill="#fff" stroke="#3065c8"/><text x="1217" y="613.8" font-size="10" letter-spacing="0.3" fill="#00cc00" stroke="#00cc00" stroke-width="0.05">4.013.245</text>
<line x1="1208" y1="612" x2="1213" y2="609" stroke="#00cc00"/>
<rect x="1213.5" y="633.5" width="63" height="12" fill="#fff" stroke="#3065c8"/><text x="1217" y="641.8" font-size="10" letter-spacing="0.3" fill="#00cc00" stroke="#00cc00" stroke-width="0.05">2.563.023,6</text>
<line x1="1208" y1="634" x2="1213" y2="638" stroke="#00cc00"/>
<rect x="1213.5" y="645.5" width="63" height="12" fill="#dcdcdc" stroke="#c4c4c4"/><text x="1218" y="655" font-size="10" letter-spacing="0.3" fill="#000" stroke="#000" stroke-width="0.05">1.396.916,90</text>
<rect x="184" y="399" width="1" height="4" fill="#3065c8"/>
<text x="185" y="412" font-size="10" letter-spacing="0.3" fill="#000" stroke="#000" stroke-width="0.05" text-anchor="middle">may 1, 2015</text>
<rect x="342" y="399" width="1" height="4" fill="#3065c8"/>
<text x="343" y="412" font-size="10" letter-spacing="0.3" fill="#000" stroke="#000" stroke-width="0.05" text-anchor="middle">jul 1, 2015</text>
<rect x="509" y="399" width="1" height="4" fill="#3065c8"/>
<text x="510" y="412" font-size="10" letter-spacing="0.3" fill="#000" stroke="#000" stroke-width="0.05" text-anchor="middle">sep 1, 2015</text>
<rect x="672" y="399" width="1" height="4" fill="#3065c8"/>
<text x="673" y="412" font-size="10" letter-spacing="0.3" fill="#000" stroke="#000" stroke-width="0.05" text-anchor="middle">nov 2, 2015</text>
<rect x="836" y="399" width="1" height="4" fill="#3065c8"/>
<text x="837" y="412" font-size="10" letter-spacing="0.3" fill="#000" stroke="#000" stroke-width="0.05" text-anchor="middle">ene 1, 2016</text>
<rect x="993" y="399" width="1" height="4" fill="#3065c8"/>
<text x="994" y="412" font-size="10" letter-spacing="0.3" fill="#000" stroke="#000" stroke-width="0.05" text-anchor="middle">mar 1, 2016</text>
<rect x="1157" y="399" width="1" height="4" fill="#3065c8"/>
<text x="1158" y="412" font-size="10" letter-spacing="0.3" fill="#000" stroke="#000" stroke-width="0.05" text-anchor="middle">may 2, 2016</text>
<rect x="415.5" y="402.5" width="69" height="13" fill="#fff" stroke="#3065c8"/>
<text x="450.5" y="411.8" font-size="10" letter-spacing="0.3" fill="#007800" stroke="#007800" stroke-width="0.05" text-anchor="middle">ago 10, 2015</text>
<rect x="1260.6" y="418.6" width="12.8" height="12.8" rx="2" fill="#cdcdcd" stroke="#000" stroke-width="1.2"/><path d="M1263.5 421.5 L1270.5 428.5 M1270.5 421.5 L1263.5 428.5" stroke="#000" stroke-width="1.1"/>
<rect x="1260.6" y="504.6" width="12.8" height="12.8" rx="2" fill="#cdcdcd" stroke="#000" stroke-width="1.2"/><path d="M1263.5 507.5 L1270.5 514.5 M1270.5 507.5 L1263.5 514.5" stroke="#000" stroke-width="1.1"/>
<rect x="1260.6" y="590.6" width="12.8" height="12.8" rx="2" fill="#cdcdcd" stroke="#000" stroke-width="1.2"/><path d="M1263.5 593.5 L1270.5 600.5 M1270.5 593.5 L1263.5 600.5" stroke="#000" stroke-width="1.1"/>
<text x="150" y="88" font-size="10" letter-spacing="0.3" fill="#e00000" stroke="#e00000" stroke-width="0.05">ago 10, 2015 |Price: 3.735,00 (-9,2%)</text>
<rect x="148.5" y="92.5" width="40" height="14" fill="#fff" stroke="#3065c8"/>
<rect x="151" y="98" width="11" height="3" fill="#0b7d0b"/>
<text x="164" y="103" font-size="10" letter-spacing="0.3" font-weight="bold" fill="#0b7d0b" stroke="#0b7d0b" stroke-width="0.05">LAN</text>
</svg>
<div style="position:absolute;left:1276px;top:76px;width:1px;height:602px;background:#ececec"></div><div style="position:absolute;left:1277px;top:74px;width:1px;height:604px;background:#858585"></div>
<div style="position:absolute;left:1278px;top:1px;width:1px;height:677px;background:#666"></div>

</body></html>
